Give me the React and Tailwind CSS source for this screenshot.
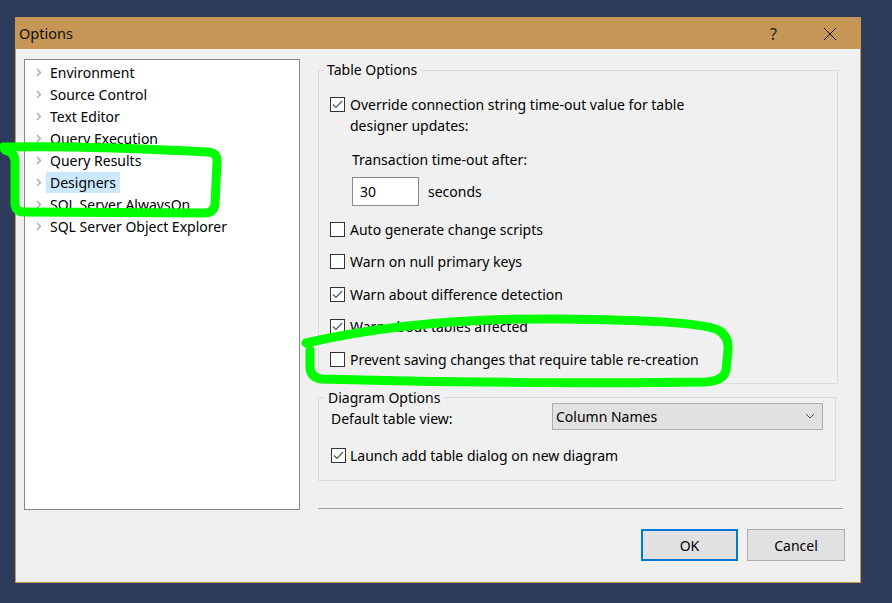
import React from "react";

const F = { fontFamily: '"Noto Sans", "Open Sans", sans-serif' };

function Chevron() {
  return (
    <svg width="6" height="9" viewBox="0 0 6 9" className="shrink-0">
      <polyline points="1,1 4.5,4.5 1,8" fill="none" stroke="#a6a6a6" strokeWidth="1.3" />
    </svg>
  );
}

function Check({ checked }) {
  return (
    <div className="w-[15px] h-[15px] shrink-0 border border-[#333333] bg-white flex items-center justify-center">
      {checked && (
        <svg width="13" height="13" viewBox="0 0 13 13">
          <polyline points="2,6.5 5,9.5 11,3" fill="none" stroke="#555555" strokeWidth="1.2" />
        </svg>
      )}
    </div>
  );
}

const treeItems = [
  "Environment",
  "Source Control",
  "Text Editor",
  "Query Execution",
  "Query Results",
  "Designers",
  "SQL Server AlwaysOn",
  "SQL Server Object Explorer",
];

function Row({ checked, children }) {
  return (
    <div className="h-[32.5px] flex items-center gap-[5px] pl-[11px]">
      <Check checked={checked} />
      <span>{children}</span>
    </div>
  );
}

export default function App() {
  return (
    <div
      className="relative w-[892px] h-[603px] overflow-hidden bg-[#2d3c5b] pt-[17px] pl-[15px] text-[14px] text-black"
      style={F}
    >
      <div className="w-[846px] h-[566px] border border-[#c59656] bg-[#f0f0f0] flex flex-col">
        {/* title bar */}
        <div className="h-[31px] bg-[#c59656] flex items-center pl-[3px] text-[#111]">
          <span className="text-[14.5px]">Options</span>
          <div className="flex-1" />
          <span className="text-[16px] mr-[46px] text-[#222]">?</span>
          <svg width="14" height="14" viewBox="0 0 14 14" className="mr-[23px]">
            <path d="M1 1 L13 13 M13 1 L1 13" stroke="#111" strokeWidth="1" />
          </svg>
        </div>

        {/* body */}
        <div className="flex pt-[10px] pl-[8px]">
          <div className="w-[276px] h-[451px] border border-[#828790] bg-white pt-[1px] shrink-0">
            {treeItems.map((t) => (
              <div key={t} className="h-[22px] flex items-center pl-[11px]">
                <Chevron />
                <span
                  className={
                    "ml-[4px] px-[4px] h-[21px] flex items-center " +
                    (t === "Designers" ? "bg-[#cce8ff]" : "")
                  }
                >
                  {t}
                </span>
              </div>
            ))}
          </div>

          <div className="flex-1 ml-[18px] mr-[17px] flex flex-col h-[451px]">
            <fieldset className="mt-[1px] mr-[5px] border border-[#dcdcdc] pb-[7px]">
              <legend className="ml-[5px] px-[3px] h-[20px] leading-[20px]">Table Options</legend>
              <div className="pt-[14px] pl-[11px] flex gap-[5px] leading-[21px]">
                <div className="pt-[3px]">
                  <Check checked />
                </div>
                <span>
                  Override connection string time-out value for table
                  <br />
                  designer updates:
                </span>
              </div>
              <div className="mt-[13px] pl-[33px] leading-[21px]">Transaction time-out after:</div>
              <div className="mt-[7px] pl-[33px] flex items-center">
                <div className="w-[67px] h-[29px] border border-[#8a8a8a] bg-white flex items-center pl-[7px]">
                  30
                </div>
                <span className="ml-[9px]">seconds</span>
              </div>
              <div className="mt-[7px]">
                <Row>Auto generate change scripts</Row>
                <Row>Warn on null primary keys</Row>
                <Row checked>Warn about difference detection</Row>
                <Row checked>Warn about tables affected</Row>
                <Row>Prevent saving changes that require table re-creation</Row>
              </div>
            </fieldset>

            <fieldset className="mt-[4px] mr-[7px] border border-[#dcdcdc] pb-[14px]">
              <legend className="ml-[6px] px-[3px] h-[20px] leading-[20px]">Diagram Options</legend>
              <div className="-mt-[5px] flex items-center pl-[12px]">
                <span className="pt-[4px]">Default table view:</span>
                <div className="ml-auto mr-[12px] w-[271px] h-[27px] border border-[#adadad] bg-[#e1e1e1] flex items-center pl-[3px] pr-[7px]">
                  <span>Column Names</span>
                  <div className="flex-1" />
                  <svg width="10" height="6" viewBox="0 0 10 6">
                    <polyline points="1,1 5,5 9,1" fill="none" stroke="#555" strokeWidth="1" />
                  </svg>
                </div>
              </div>
              <div className="mt-[15px] pl-[12px] flex items-center gap-[4px] h-[21px]">
                <Check checked />
                <span>Launch add table dialog on new diagram</span>
              </div>
            </fieldset>

            <div className="flex-1" />
            <div className="h-px bg-[#a0a0a0] mb-[1px]" />
          </div>
        </div>

        <div className="flex justify-end gap-[9px] mt-[19px] pr-[15px]">
          <div className="w-[97px] h-[32px] border-2 border-[#0078d7] bg-[#e1e1e1] flex items-center justify-center">
            OK
          </div>
          <div className="w-[98px] h-[32px] border border-[#adadad] bg-[#e1e1e1] flex items-center justify-center">
            Cancel
          </div>
        </div>
      </div>

      {/* hand-drawn annotations */}
      <svg
        className="absolute left-0 top-0 pointer-events-none"
        width="892"
        height="603"
        viewBox="0 0 892 603"
      >
        <path
          d="M3 147 C 60 146, 150 149, 208 152 Q 218 153 217 162 L 215 204 Q 214 213 204 213 L 24 212 Q 15 212 15 203 L 15 162 Q 15 152 5 150"
          fill="none"
          stroke="#00ff00"
          strokeWidth="9"
          strokeLinecap="round"
          strokeLinejoin="round"
        />
        <path
          d="M306 343 C 380 326, 470 318, 560 319 C 640 320, 700 322, 718 330 Q 729 336 728 350 L 726 370 Q 724 381 705 382 C 600 384, 420 382, 322 379 Q 311 378 310 368 L 310 350"
          fill="none"
          stroke="#00ff00"
          strokeWidth="9"
          strokeLinecap="round"
          strokeLinejoin="round"
        />
      </svg>
    </div>
  );
}
